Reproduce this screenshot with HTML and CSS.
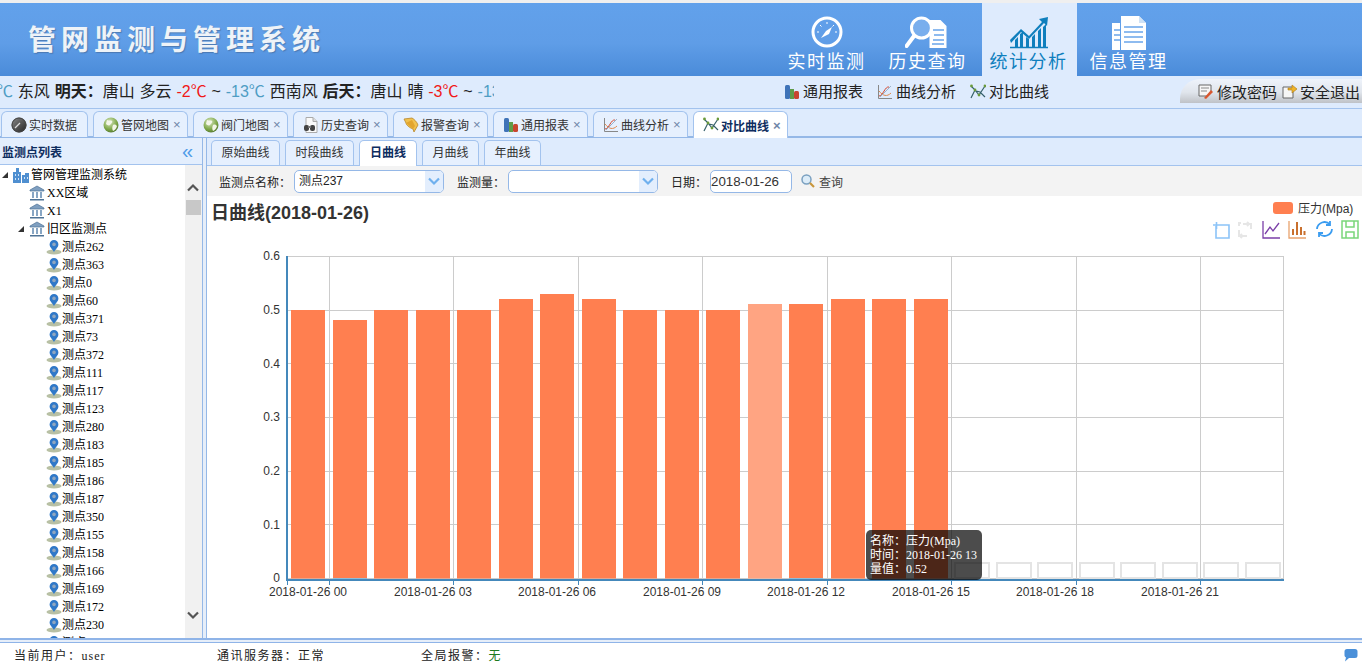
FILE: index.html
```html
<!DOCTYPE html>
<html lang="zh-CN">
<head>
  <meta charset="UTF-8">
  <meta name="viewport" content="width=device-width, initial-scale=1.0">
  <title>管网监测与管理系统</title>
  <link rel="stylesheet" href="styles.css">
</head>
<body>
  <!-- 共用小图标 -->
  <svg class="icon-defs" width="0" height="0">
    <defs>
      <linearGradient id="ballGrad" x1="0" y1="0" x2="1" y2="1"><stop offset="0" stop-color="#8a8a8a"/><stop offset="1" stop-color="#222"/></linearGradient>
      <radialGradient id="globeGrad" cx=".4" cy=".3" r=".8"><stop offset="0" stop-color="#d8e8c0"/><stop offset=".6" stop-color="#7fa84a"/><stop offset="1" stop-color="#4a6e28"/></radialGradient>
      <symbol id="i-ball" viewBox="0 0 16 16"><circle cx="8" cy="8" r="7.5" fill="url(#ballGrad)"/><path d="M4 11 9 6" stroke="#ddd" stroke-width="1.2"/><circle cx="8" cy="8" r="7" fill="none" stroke="#444"/></symbol>
      <symbol id="i-globe" viewBox="0 0 16 16"><circle cx="8" cy="8" r="7.5" fill="url(#globeGrad)"/><path d="M4 3c2 1 4 0 5 1s-1 3-2 4-3 0-4-1zM10 8c2-1 3 0 4 1-1 3-2 4-4 5-1-2-1-4 0-6z" fill="#f4f6e8"/></symbol>
      <symbol id="i-history" viewBox="0 0 16 16"><path d="M3 .5h7l4 4v11H3z" fill="#fafafa" stroke="#aaa"/><path d="M10 .5v4h4" fill="#ddd" stroke="#aaa"/><rect x="1" y="8" width="5" height="6" rx="2" fill="#444"/><rect x="7" y="8" width="5" height="6" rx="2" fill="#444"/><rect x="5" y="9" width="3" height="2" fill="#777"/></symbol>
      <symbol id="i-bell" viewBox="0 0 16 16"><path d="M1 2 9 1c2 1 5 4 6 7l-4 7-1-3C7 11 3 8 3 6z" fill="#f1c14e" stroke="#b8872a" stroke-width=".8"/><path d="M3 6 9 3l3 6-2 3" fill="#e2a52e"/></symbol>
      <symbol id="i-bars" viewBox="0 0 16 16"><rect x="1" y="1" width="5" height="14" rx="1.5" fill="#3f73b8"/><rect x="6" y="5" width="4" height="10" fill="#5f9c48"/><rect x="10" y="7" width="5" height="8" rx="1.5" fill="#c8452e"/></symbol>
      <symbol id="i-curve" viewBox="0 0 16 16"><path d="M1.5 1v13.5H15" fill="none" stroke="#888"/><path d="M2 12C6 12 8 2 12 3" fill="none" stroke="#d2462e"/><path d="M2 7c4 5 8 6 12 2" fill="none" stroke="#e08a4e"/><path d="M3 13 14 2" stroke="#9ab0c8"/></symbol>
      <symbol id="i-compare" viewBox="0 0 16 16"><path d="M1 14 5 6l4 5 6-9M1 2l5 5 4 1 5 5" fill="none" stroke="#35606a" stroke-width="1.2"/><g fill="#6a9a3a"><circle cx="5" cy="6" r="1.4"/><circle cx="9" cy="11" r="1.4"/><circle cx="15" cy="2" r="1.4"/><circle cx="1.5" cy="2" r="1.4"/></g></symbol>
      <symbol id="i-pwd" viewBox="0 0 16 16"><path d="M1 2h12v8l-3 3H1z" fill="#f6f6f6" stroke="#666"/><path d="M3 5h8M3 8h6" stroke="#888"/><path d="M6 15 13 7l2 2-7 7z" fill="#d8562e"/></symbol>
      <symbol id="i-exit" viewBox="0 0 16 16"><path d="M2 4h10v11H2z" fill="#f6f6f6" stroke="#666"/><path d="M7 5h4V2l5 4-5 4V7H7z" fill="#f0b428" stroke="#a9791a" stroke-width=".6"/></symbol>
      <symbol id="i-city" viewBox="0 0 16 16"><path d="M0 16V5h3V1h3v4h2v11zM9 16V8h3V6h4v10z" fill="#4f8fd0"/><path d="M2 7h1v2H2zm3 0h1v2H5zM2 11h1v2H2zm3 0h1v2H5zm6-1h1v2h-1zm3 0h1v2h-1z" fill="#cfe2f6"/></symbol>
      <symbol id="i-bank" viewBox="0 0 16 16"><path d="M8 1 1 5v1h14V5z" fill="#7f9fc0" stroke="#4f7396" stroke-width=".7"/><path d="M3 7h2v6H3zm4 0h2v6H7zm4 0h2v6h-2z" fill="#88a6c4"/><path d="M1 14h14v1.5H1z" fill="#4f7396"/></symbol>
      <symbol id="i-pin" viewBox="0 0 16 16"><ellipse cx="8" cy="13" rx="7.5" ry="2.6" fill="#b8c0a4"/><path d="M8 1a4.4 4.4 0 0 1 4.4 4.4C12.400 8.500 9 10.500 8 13 7 10.500 3.600 8.500 3.600 5.400A4.400 4.400 0 0 1 8 1z" fill="#2f78c8"/><circle cx="8" cy="5.400" r="1.800" fill="#8fa6c0"/></symbol>
      <symbol id="i-chevron" viewBox="0 0 14 14"><path d="M2 4.500 7 9.500 12 4.500" fill="none" stroke="currentColor" stroke-width="2.200"/></symbol>
    </defs>
  </svg>

  <div class="top-strip"></div>
  <header class="header">
    <div class="logo-title">管网监测与管理系统</div>
    <nav class="main-nav">
      <a class="nav-item">
        <svg class="nav-icon" viewBox="0 0 40 36"><circle cx="20" cy="16" r="14" fill="none" stroke="#fff" stroke-width="3"/><path d="M14 22 19 15 25 11 22 18z" fill="#fff"/><path d="M10 16h2M20 6v2M28 16h2M13 9l1.500 1.500M27 9l-1.500 1.500" stroke="#fff"/></svg>
        <span>实时监测</span>
      </a>
      <a class="nav-item">
        <svg class="nav-icon wide" viewBox="0 0 46 36"><path d="M24.500 4h11l6 6v22h-17z" fill="#fff"/><path d="M28 14h11M29 19h10M28 24h11M27 28h12" stroke="#6aa5ea" stroke-width="1.500"/><circle cx="16.500" cy="12" r="10" fill="#7fb2ee" fill-opacity=".8" stroke="#fff" stroke-width="3"/><path d="M9 20 1.500 30" stroke="#fff" stroke-width="4" stroke-linecap="round"/></svg>
        <span>历史查询</span>
      </a>
      <a class="nav-item active">
        <svg class="nav-icon" viewBox="0 0 40 36"><path d="M1 24 12 13l8 7L33 6l-3-3 9-2-1 9-3-3-15 16-8-7L2 27z" fill="#0f7fbd"/><path d="M6 31V24l3-3v10zM11 31V18l3-2v15zM17 31V21l3 2v8zM23 31V21l3-3v13zM29 31V15l3-3v19zM34 31V11l3-3v23z" fill="#0f7fbd"/><path d="M1 31.500h38" stroke="#0f7fbd" stroke-width="1.500"/></svg>
        <span>统计分析</span>
      </a>
      <a class="nav-item">
        <svg class="nav-icon" viewBox="0 0 40 36"><path d="M12 0h18l7 7v27H12z" fill="#fff"/><path d="M3 7h8v27H3z" fill="#fff"/><path d="M15 11h19M15 16h19M15 21h19M15 26h19M5 14h6M5 19h6M5 24h6" stroke="#6aa5ea" stroke-width="1.500"/><path d="M30 0v7h7" fill="#cfe2f6"/></svg>
        <span>信息管理</span>
      </a>
    </nav>
  </header>

  <div class="sub-bar">
    <div class="weather"><div class="weather-text"><span class="cold">℃</span> 东风 <b>明天：</b>唐山 多云 <span class="hot">-2℃</span> ~ <span class="cold">-13℃</span> 西南风 <b>后天：</b>唐山 晴 <span class="hot">-3℃</span> ~ <span class="cold">-13℃</span> 北风</div></div>
    <div class="sub-nav">
      <a><svg class="ico"><use href="#i-bars"/></svg>通用报表</a>
      <a><svg class="ico"><use href="#i-curve"/></svg>曲线分析</a>
      <a><svg class="ico"><use href="#i-compare"/></svg>对比曲线</a>
    </div>
    <div class="user-links">
      <a><svg class="ico"><use href="#i-pwd"/></svg>修改密码</a>
      <a><svg class="ico"><use href="#i-exit"/></svg>安全退出</a>
    </div>
  </div>

  <div class="page-tabs">
    <div class="tab first"><svg class="ico"><use href="#i-ball"/></svg>实时数据</div>
    <div class="tab"><svg class="ico"><use href="#i-globe"/></svg>管网地图<i>×</i></div>
    <div class="tab"><svg class="ico"><use href="#i-globe"/></svg>阀门地图<i>×</i></div>
    <div class="tab"><svg class="ico"><use href="#i-history"/></svg>历史查询<i>×</i></div>
    <div class="tab"><svg class="ico"><use href="#i-bell"/></svg>报警查询<i>×</i></div>
    <div class="tab"><svg class="ico"><use href="#i-bars"/></svg>通用报表<i>×</i></div>
    <div class="tab"><svg class="ico"><use href="#i-curve"/></svg>曲线分析<i>×</i></div>
    <div class="tab active"><svg class="ico"><use href="#i-compare"/></svg>对比曲线<i>×</i></div>
  </div>

  <div class="workspace">
    <aside class="sidebar">
      <div class="side-title"><span>监测点列表</span><em>«</em></div>
      <div class="tree-wrap">
        <ul class="tree">
          <li class="lv0"><u></u><svg class="ico"><use href="#i-city"/></svg>管网管理监测系统</li>
          <li class="lv1"><svg class="ico"><use href="#i-bank"/></svg>XX区域</li>
          <li class="lv1"><svg class="ico"><use href="#i-bank"/></svg>X1</li>
          <li class="lv1"><u></u><svg class="ico"><use href="#i-bank"/></svg>旧区监测点</li>
          <li class="lv2"><svg class="ico"><use href="#i-pin"/></svg>测点262</li>
          <li class="lv2"><svg class="ico"><use href="#i-pin"/></svg>测点363</li>
          <li class="lv2"><svg class="ico"><use href="#i-pin"/></svg>测点0</li>
          <li class="lv2"><svg class="ico"><use href="#i-pin"/></svg>测点60</li>
          <li class="lv2"><svg class="ico"><use href="#i-pin"/></svg>测点371</li>
          <li class="lv2"><svg class="ico"><use href="#i-pin"/></svg>测点73</li>
          <li class="lv2"><svg class="ico"><use href="#i-pin"/></svg>测点372</li>
          <li class="lv2"><svg class="ico"><use href="#i-pin"/></svg>测点111</li>
          <li class="lv2"><svg class="ico"><use href="#i-pin"/></svg>测点117</li>
          <li class="lv2"><svg class="ico"><use href="#i-pin"/></svg>测点123</li>
          <li class="lv2"><svg class="ico"><use href="#i-pin"/></svg>测点280</li>
          <li class="lv2"><svg class="ico"><use href="#i-pin"/></svg>测点183</li>
          <li class="lv2"><svg class="ico"><use href="#i-pin"/></svg>测点185</li>
          <li class="lv2"><svg class="ico"><use href="#i-pin"/></svg>测点186</li>
          <li class="lv2"><svg class="ico"><use href="#i-pin"/></svg>测点187</li>
          <li class="lv2"><svg class="ico"><use href="#i-pin"/></svg>测点350</li>
          <li class="lv2"><svg class="ico"><use href="#i-pin"/></svg>测点155</li>
          <li class="lv2"><svg class="ico"><use href="#i-pin"/></svg>测点158</li>
          <li class="lv2"><svg class="ico"><use href="#i-pin"/></svg>测点166</li>
          <li class="lv2"><svg class="ico"><use href="#i-pin"/></svg>测点169</li>
          <li class="lv2"><svg class="ico"><use href="#i-pin"/></svg>测点172</li>
          <li class="lv2"><svg class="ico"><use href="#i-pin"/></svg>测点230</li>
          <li class="lv2"><svg class="ico"><use href="#i-pin"/></svg>测点231</li>
        </ul>
        <div class="scrollbar">
          <svg class="arrow up"><use href="#i-chevron"/></svg>
          <div class="thumb"></div>
          <svg class="arrow down"><use href="#i-chevron"/></svg>
        </div>
      </div>
    </aside>

    <main class="content">
      <div class="inner-tabs">
        <div class="itab">原始曲线</div>
        <div class="itab">时段曲线</div>
        <div class="itab active">日曲线</div>
        <div class="itab short">月曲线</div>
        <div class="itab short">年曲线</div>
      </div>
      <div class="filter-bar">
        <label class="lbl-point">监测点名称：</label>
        <div class="combo"><span>测点237</span><b><svg><use href="#i-chevron"/></svg></b></div>
        <label class="lbl-qty">监测量：</label>
        <div class="combo"><span></span><b><svg><use href="#i-chevron"/></svg></b></div>
        <label class="lbl-date">日期：</label>
        <div class="date-box">2018-01-26</div>
        <a class="search-btn">
          <svg width="16" height="16" viewBox="0 0 16 16"><circle cx="6.500" cy="6.500" r="4.500" fill="#dcecf8" stroke="#7aa0c0" stroke-width="1.500"/><path d="M10 10l4 4" stroke="#c8963c" stroke-width="2.200"/></svg>查询
        </a>
      </div>
      <div class="chart">
        <svg class="chart-svg" viewBox="207 196 1155 442">
          <text class="chart-title" x="211" y="219">日曲线(2018-01-26)</text>
          <rect x="1273" y="202" width="20" height="12" rx="3" fill="#ff7f50"/>
          <text class="legend" x="1298" y="213">压力(Mpa)</text>

          <!-- 工具箱 -->
          <g fill="none" stroke-width="1.300">
            <path d="M1217 225h12v13h-13v-12M1213 225h7M1216.500 222v7" stroke="#8cc4f8" stroke-width="1.600"/>
            <path d="M1243 224h8v5M1247 222l2 2-2 2M1247 236h-8v-6M1242 234l-2 2 2 2M1239 226v-3h2" stroke="#e6e6e6" stroke-width="2"/>
            <path d="M1263 221v17h17M1265 234l5-7 3 4 6-8" stroke="#7b3fa8"/>
            <path d="M1289 221v17h17" stroke="#e8a36e"/>
            <path d="M1293 235v-6M1297 235v-13M1301 235v-8M1304.500 235v-4" stroke="#c9702e" stroke-width="2"/>
            <path d="M1317 229a7.500 7.500 0 0 1 13-4.500M1332 229a7.500 7.500 0 0 1-13 4.500M1330 221v4h-4M1319 237v-4h4" stroke="#3a9cf0" stroke-width="1.800"/>
            <path d="M1342 221h16v17h-16zM1346 221v6h8v-6M1346 238v-6h8v6" stroke="#7ad67a" stroke-width="1.500"/>
          </g>

          <!-- 网格 -->
          <g class="grid">
            <path d="M288 256.500H1283M288 310.500H1283M288 363.500H1283M288 417.500H1283M288 471.500H1283M288 524.500H1283M288 578.500H1283"/>
            <path d="M329.500 256V579M453.500 256V579M578.500 256V579M702.500 256V579M827.500 256V579M951.500 256V579M1076.500 256V579M1200.500 256V579M1283.500 256V579"/>
          </g>

          <!-- 柱 -->
          <g fill="#ff7f50">
            <rect x="291" y="310" width="34" height="268.500"/>
            <rect x="333" y="320" width="34" height="258"/>
            <rect x="374" y="310" width="34" height="268.500"/>
            <rect x="416" y="310" width="34" height="268.500"/>
            <rect x="457" y="310" width="34" height="268.500"/>
            <rect x="499" y="299" width="34" height="279.500"/>
            <rect x="540" y="294" width="34" height="284.500"/>
            <rect x="582" y="299" width="34" height="279.500"/>
            <rect x="623" y="310" width="34" height="268.500"/>
            <rect x="665" y="310" width="34" height="268.500"/>
            <rect x="706" y="310" width="34" height="268.500"/>
            <rect x="748" y="304" width="34" height="274.500" fill="#ffa482"/>
            <rect x="789" y="304" width="34" height="274"/>
            <rect x="831" y="299" width="34" height="279.500"/>
            <rect x="872" y="299" width="34" height="279.500"/>
            <rect x="914" y="299" width="34" height="279.500"/>
          </g>
          <path d="M333 578.500h34M789 578.500h34" stroke="#8fbcd8"/>
          <g fill="#fff" stroke="#e4e4e4" stroke-width="2">
            <rect x="955" y="563" width="34" height="15"/>
            <rect x="997" y="563" width="34" height="15"/>
            <rect x="1038" y="563" width="34" height="15"/>
            <rect x="1080" y="563" width="34" height="15"/>
            <rect x="1121" y="563" width="34" height="15"/>
            <rect x="1163" y="563" width="34" height="15"/>
            <rect x="1204" y="563" width="34" height="15"/>
            <rect x="1246" y="563" width="34" height="15"/>
          </g>

          <!-- 坐标轴 -->
          <g class="axis">
            <path d="M287 256V581M286 580H1284" stroke-width="2"/>
            <path d="M287.500 581v4M329.500 581v4M453.500 581v4M578.500 581v4M702.500 581v4M827.500 581v4M951.500 581v4M1076.500 581v4M1200.500 581v4"/>
          </g>
          <g class="y-labels">
            <text x="280" y="260">0.6</text>
            <text x="280" y="314">0.5</text>
            <text x="280" y="368">0.4</text>
            <text x="280" y="421">0.3</text>
            <text x="280" y="475">0.2</text>
            <text x="280" y="529">0.1</text>
            <text x="280" y="582">0</text>
          </g>
          <g class="x-labels">
            <text x="308" y="596">2018-01-26 00</text>
            <text x="433" y="596">2018-01-26 03</text>
            <text x="557" y="596">2018-01-26 06</text>
            <text x="682" y="596">2018-01-26 09</text>
            <text x="806" y="596">2018-01-26 12</text>
            <text x="931" y="596">2018-01-26 15</text>
            <text x="1055" y="596">2018-01-26 18</text>
            <text x="1180" y="596">2018-01-26 21</text>
          </g>
        </svg>
        <div class="chart-tip">
          <div>名称：压力(Mpa)</div>
          <div>时间：2018-01-26 13</div>
          <div>量值：0.52</div>
        </div>
      </div>
    </main>
  </div>

  <footer class="footer">
    <div class="f-user">当前用户：<span>user</span></div>
    <div class="f-server">通讯服务器：正常</div>
    <div class="f-alarm">全局报警：<span>无</span></div>
    <svg class="f-chat" viewBox="0 0 14 14"><path d="M3 1h8a2.500 2.500 0 0 1 2.500 2.500v4A2.500 2.500 0 0 1 11 10H5l-4 3.500 1-4A2.500 2.500 0 0 1 .5 7.500v-4A2.500 2.500 0 0 1 3 1z" fill="#4a90d9"/></svg>
  </footer>
</body>
</html>
```

FILE: styles.css
```css
/* 基本頁面 */
* {
  box-sizing: border-box;
}

html, body {
  margin: 0;
  height: 666px;
  overflow: hidden;
}

body {
  font-family: "Liberation Sans", "Noto Sans CJK SC", sans-serif;
  font-size: 12px;
  color: #222;
  background-color: #fff;
  display: flex;
  flex-direction: column;
}

.icon-defs {
  position: absolute;
}

.ico {
  width: 16px;
  height: 16px;
  flex: none;
}

.top-strip {
  height: 3px;
  background-color: #efefef;
}

/* 頂部 */
.header {
  height: 73px;
  display: flex;
  background: linear-gradient(to bottom, #62a1eb 0%, #5f9de7 55%, #4a8bd9 100%);
}

.logo-title {
  width: 779px;
  padding: 19px 0 0 28px;
  font-size: 28px;
  line-height: 38px;
  font-weight: bold;
  letter-spacing: 5px;
  color: #eef3f8;
  text-shadow: 1px 1px 1px rgba(60, 90, 130, 0.5);
}

.main-nav {
  display: flex;
  gap: 6px;
}

.nav-item {
  width: 95px;
  display: flex;
  flex-direction: column;
  align-items: center;
  padding-top: 13px;
  color: #fff;
  font-size: 18px;
  line-height: 24px;
  letter-spacing: 1.500px;
}

.nav-icon {
  width: 40px;
  height: 36px;
  margin-bottom: -2px;
}

.nav-icon.wide {
  width: 46px;
}

.nav-item.active {
  margin: 0 -2px 0 1px;
  padding-right: 2px;
  background-color: #deebfd;
  color: #0f7fbd;
}

/* 天氣與快捷列 */
.sub-bar {
  height: 32px;
  display: flex;
  background-color: #deebfd;
  position: relative;
}

.weather {
  width: 494px;
  overflow: hidden;
  font-size: 16px;
  line-height: 32px;
  white-space: nowrap;
  word-spacing: 0.4px;
}

.weather-text {
  margin-left: -3px;
}

.hot {
  color: #f01818;
}

.cold {
  color: #4f9dc4;
}

.sub-nav {
  margin-left: 290px;
  display: flex;
  gap: 14px;
  font-size: 15px;
  line-height: 32px;
}

.sub-nav a {
  display: flex;
  align-items: center;
  gap: 3px;
}

.user-links {
  position: absolute;
  right: 0;
  top: 3px;
  width: 182px;
  height: 24px;
  padding-left: 18px;
  display: flex;
  gap: 4px;
  align-items: center;
  font-size: 15px;
  border-top-left-radius: 20px;
  background: linear-gradient(to bottom, #eef3fb 0%, #e0e5ec 55%, #bfc2c7 100%);
}

.user-links a {
  display: flex;
  align-items: center;
  gap: 3px;
  white-space: nowrap;
}

/* 分頁列 */
.page-tabs {
  height: 30px;
  display: flex;
  gap: 5px;
  padding: 2px 0 0 1px;
  background-color: #deebfd;
  border-top: 1px solid #a3c3ee;
  border-bottom: 2px solid #95b8e7;
}

.tab {
  width: 95px;
  height: 26px;
  padding-left: 9px;
  display: flex;
  align-items: center;
  gap: 2px;
  color: #333;
  background-color: #e6f0fe;
  border: 1px solid #a3c3ee;
  border-bottom: none;
  border-radius: 6px 6px 0 0;
  white-space: nowrap;
}

.tab.first {
  width: 87px;
}

.tab i {
  margin-left: 2px;
  font-style: normal;
  font-size: 13px;
  color: #6f86a8;
}

.tab.active {
  background-color: #fff;
  color: #0e2d5f;
  font-weight: bold;
  height: 27px;
}

/* 主區域 */
.workspace {
  flex: 1;
  min-height: 0;
  display: flex;
  background-color: #e6eef9;
}

.sidebar {
  width: 203px;
  display: flex;
  flex-direction: column;
  background-color: #fff;
  border-right: 1px solid #95b8e7;
}

.side-title {
  height: 27px;
  display: flex;
  justify-content: space-between;
  align-items: center;
  padding: 0 9px 0 2px;
  font-weight: bold;
  color: #0e2d5f;
  background-color: #e3eefd;
  border-bottom: 1px solid #a3c3ee;
}

.side-title em {
  font-style: normal;
  font-weight: normal;
  font-size: 20px;
  line-height: 20px;
  color: #4f9be8;
}

.tree-wrap {
  flex: 1;
  min-height: 0;
  display: flex;
  overflow: hidden;
}

.tree {
  flex: 1;
  margin: 0;
  padding: 1px 0 0;
  list-style: none;
  font-family: "Liberation Serif", "Noto Sans CJK SC", serif;
  overflow: hidden;
}

.tree li {
  height: 18px;
  display: flex;
  align-items: center;
  gap: 2px;
  line-height: 18px;
  color: #000;
  position: relative;
}

.tree .lv0 { padding-left: 13px; }
.tree .lv1 { padding-left: 29px; }
.tree .lv2 { padding-left: 46px; gap: 0; }

/* 樹節點的展開三角 */
.tree u {
  position: absolute;
  top: 6px;
  width: 0;
  height: 0;
  border-style: solid;
  border-width: 0 0 6px 6px;
  border-color: transparent transparent #333 transparent;
}

.tree .lv0 u { left: 2px; }
.tree .lv1 u { left: 18px; }

.scrollbar {
  width: 17px;
  background-color: #f1f1f1;
  position: relative;
}

.scrollbar .thumb {
  position: absolute;
  top: 35px;
  left: 1px;
  width: 15px;
  height: 15px;
  background-color: #c8c8c8;
}

.arrow {
  position: absolute;
  left: 1px;
  width: 14px;
  height: 14px;
  color: #555;
}

.arrow.up {
  top: 16px;
  transform: rotate(180deg);
}

.arrow.down {
  bottom: 16px;
}

.content {
  flex: 1;
  min-width: 0;
  margin-left: 3px;
  display: flex;
  flex-direction: column;
  background-color: #fff;
  border-left: 1px solid #95b8e7;
}

.inner-tabs {
  height: 28px;
  display: flex;
  gap: 5px;
  padding: 2px 0 0 4px;
  background-color: #deebfd;
  border-bottom: 1px solid #a3c3ee;
}

.itab {
  width: 69px;
  height: 25px;
  line-height: 25px;
  text-align: center;
  color: #333;
  background-color: #e6f0fe;
  border: 1px solid #a3c3ee;
  border-bottom: none;
  border-radius: 5px 5px 0 0;
}

.itab.active {
  width: 58px;
  height: 26px;
  font-weight: bold;
  color: #0e2d5f;
  background-color: #fff;
}

.itab.short {
  width: 57px;
}

.filter-bar {
  height: 30px;
  display: flex;
  align-items: center;
  padding-left: 12px;
  background-color: #f3f3f3;
  white-space: nowrap;
}

.lbl-point { width: 75px; }
.lbl-qty { width: 51px; margin-left: 13px; }
.lbl-date { width: 39px; margin-left: 13px; }

.combo {
  width: 150px;
  height: 23px;
  display: flex;
  justify-content: space-between;
  background-color: #fff;
  border: 1px solid #95b8e7;
  border-radius: 5px;
  overflow: hidden;
  line-height: 21px;
}

.combo span {
  padding-left: 4px;
}

.combo b {
  width: 18px;
  background-color: #e3eefd;
  display: flex;
  align-items: center;
  justify-content: center;
}

.combo svg {
  width: 14px;
  height: 14px;
  color: #6fb0ee;
}

.date-box {
  width: 82px;
  height: 23px;
  line-height: 21px;
  padding-left: 0;
  background-color: #fff;
  border: 1px solid #95b8e7;
  border-radius: 5px;
  font-size: 13.300px;
  color: #333;
}

.search-btn {
  margin-left: 8px;
  display: flex;
  align-items: center;
  gap: 3px;
  color: #444;
}

/* 圖表 */
.chart {
  flex: 1;
  min-height: 0;
  position: relative;
  background-color: #fff;
}

.chart-svg {
  display: block;
  width: 1155px;
  height: 442px;
  font-family: "Liberation Sans", "Noto Sans CJK SC", sans-serif;
}

.chart-title {
  font-size: 18px;
  font-weight: bold;
  fill: #333;
}

.legend {
  font-size: 12px;
  fill: #333;
}

.grid path {
  fill: none;
  stroke: #ccc;
}

.axis path {
  fill: none;
  stroke: #4488bb;
}

.y-labels text {
  font-size: 12px;
  fill: #333;
  text-anchor: end;
}

.x-labels text {
  font-size: 12px;
  fill: #333;
  text-anchor: middle;
}

.chart-tip {
  position: absolute;
  left: 659px;
  top: 334px;
  width: 116px;
  height: 50px;
  padding: 4px 0 0 4px;
  border-radius: 5px;
  background-color: rgba(0, 0, 0, 0.7);
  color: #fff;
  font-family: "Liberation Serif", "Noto Sans CJK SC", serif;
  line-height: 14px;
  white-space: nowrap;
}

/* 底部 */
.footer {
  height: 28px;
  display: flex;
  align-items: center;
  padding: 3px 0 0 14px;
  position: relative;
  background-color: #fff;
  border-top: 2px solid #8fb4e8;
  box-shadow: inset 0 2px 0 #e6eef9, inset 0 3px 0 #8fb4e8;
  letter-spacing: 1.500px;
}

.footer .f-user { width: 203px; }
.footer .f-server { width: 204px; }

.f-user span {
  font-family: "Liberation Serif", serif;
  letter-spacing: 1px;
}

.f-alarm span {
  color: #1d7a1d;
}

.f-chat {
  position: absolute;
  right: 4px;
  top: 8px;
  width: 14px;
  height: 14px;
}
```
